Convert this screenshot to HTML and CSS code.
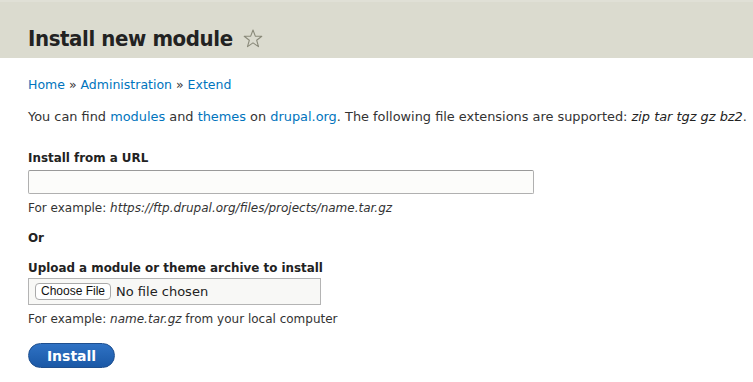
FILE: index.html
```html
<!DOCTYPE html>
<html lang="en">
<head>
    <meta charset="UTF-8">
    <title>Install new module</title>
    <link rel="stylesheet" href="styles.css">
</head>
<body>
    <header class="page-header">
        <h1>Install new module <span class="star">
            <svg width="20" height="19" viewBox="0 0 20 19"><path d="M10 1 L12.3 7.1 L18.8 7.3 L13.7 11.3 L15.5 17.6 L10 13.9 L4.5 17.6 L6.3 11.3 L1.2 7.3 L7.7 7.1 Z" fill="none" stroke="#8a8a7a" stroke-width="1.1" stroke-linejoin="round"/></svg>
        </span></h1>
    </header>

    <div class="content">
        <nav class="breadcrumb">
            <a href="#">Home</a> &raquo; <a href="#">Administration</a> &raquo; <a href="#">Extend</a>
        </nav>

        <p class="intro">You can find <a href="#">modules</a> and <a href="#">themes</a> on <a href="#">drupal.org</a>. The following file extensions are supported: <em>zip tar tgz gz bz2</em>.</p>

        <div class="form-item url-item">
            <label for="projectUrl">Install from a URL</label>
            <input type="text" id="projectUrl" class="text-input">
            <div class="description">For example: <em>https://ftp.drupal.org/files/projects/name.tar.gz</em></div>
        </div>

        <div class="or">Or</div>

        <div class="form-item upload-item">
            <label>Upload a module or theme archive to install</label>
            <div class="file-box">
                <span class="file-btn">Choose File</span>
                <span class="file-name">No file chosen</span>
            </div>
            <div class="description">For example: <em>name.tar.gz</em> from your local computer</div>
        </div>

        <button class="install-btn">Install</button>
    </div>
</body>
</html>
```

FILE: styles.css
```css
body {
    margin: 0;
    font-family: 'DejaVu Sans', sans-serif;
    font-size: 12.5px;
    color: #333;
    background: #fff;
}

a {
    color: #0074bd;
    text-decoration: none;
}

.page-header {
    background-color: #dbdbcf;
    border-top: 2px solid #e0e0d6;
    box-sizing: border-box;
    height: 58px;
    padding: 0 28px;
}

.page-header h1 {
    margin: 0;
    padding-top: 24px;
    font-family: 'DejaVu Sans Condensed', 'DejaVu Sans', sans-serif;
    font-stretch: condensed;
    font-size: 22px;
    letter-spacing: -0.4px;
    font-weight: bold;
    color: #222;
    display: flex;
    align-items: center;
    gap: 10px;
    line-height: 26px;
}

.star {
    display: flex;
    margin-top: -1px;
}

.content {
    padding: 0 0 0 28px;
}

.breadcrumb {
    margin-top: 18px;
    line-height: 18px;
}

.intro {
    margin: 14px 0 0;
    font-size: 12.9px;
    line-height: 18px;
    white-space: nowrap;
}

.intro em {
    color: #222;
}

.form-item label {
    display: block;
    font-size: 11.9px;
    font-weight: bold;
    color: #222;
    line-height: 18px;
}

.url-item {
    margin-top: 23px;
}

.url-item label {
    margin-bottom: 3px;
}

.upload-item {
    margin-top: 12px;
}

.upload-item label {
    margin-bottom: 1px;
}

.text-input {
    display: block;
    box-sizing: border-box;
    width: 506px;
    height: 24px;
    border: 1px solid #b0b0b0;
    border-top-color: #999;
    border-radius: 2px;
    background: #fcfcfa;
    margin: 0;
}

.description {
    font-size: 12px;
    color: #333;
    line-height: 16px;
    margin-top: 6px;
}

.or {
    font-size: 11.9px;
    font-weight: bold;
    color: #222;
    margin-top: 13px;
    line-height: 18px;
}

.file-box {
    box-sizing: border-box;
    width: 293px;
    height: 27px;
    border: 1px solid #b4b4b4;
    background: #f8f8f6;
    display: flex;
    align-items: center;
    padding-left: 6px;
    gap: 5px;
}

.file-btn {
    font-family: 'Liberation Sans', sans-serif;
    font-size: 12px;
    color: #111;
    background: #fff;
    border: 1px solid #aaa;
    border-radius: 4px;
    padding: 1px 5px;
    line-height: 13px;
}

.file-name {
    font-size: 13px;
    color: #222;
}

.install-btn {
    display: block;
    margin-top: 16px;
    width: 87px;
    height: 25px;
    border: 1px solid #1e4f8f;
    border-radius: 13px;
    background: linear-gradient(#2f72c4, #1a58a6);
    color: #fff;
    font-family: 'DejaVu Sans', sans-serif;
    font-size: 14px;
    font-weight: bold;
    cursor: pointer;
}
```
